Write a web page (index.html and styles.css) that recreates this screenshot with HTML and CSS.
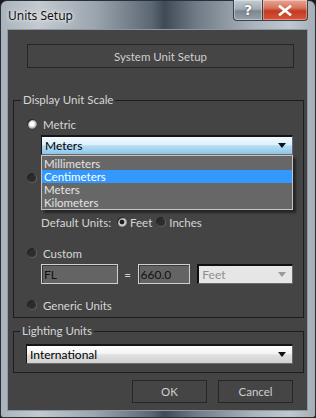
FILE: index.html
```html
<!DOCTYPE html>
<html>
<head>
<meta charset="utf-8">
<link rel="stylesheet" href="styles.css">
</head>
<body>
<div class="window">
  <div class="titlebar">
    <span class="title">Units Setup</span>
    <div class="caption-btns">
      <div class="cap help">?</div>
      <div class="cap close">
        <svg width="14" height="11" viewBox="0 0 14 11"><path d="M2 1.5 L12 9.5 M12 1.5 L2 9.5" stroke="#fff" stroke-width="2.6" stroke-linecap="square" fill="none"/></svg>
      </div>
    </div>
  </div>
  <div class="frame">
    <div class="client">
      <div class="btn sys">System Unit Setup</div>

      <div class="group display">
        <div class="legend">Display Unit Scale</div>
        <div class="row r-metric"><span class="radio on"></span><span>Metric</span></div>
        <div class="combo-wrap">
          <div class="combo blue"><span>Meters</span><span class="arrow"></span></div>
          <ul class="dropdown">
            <li>Millimeters</li>
            <li class="sel">Centimeters</li>
            <li>Meters</li>
            <li>Kilometers</li>
          </ul>
        </div>
        <div class="row r-us"><span class="radio"></span></div>
        <div class="combo-us"><div class="combo grey"><span class="arrow"></span></div></div>
        <div class="row r-default"><span class="txt">Default Units:</span><span class="radio on small"></span><span class="txt">Feet</span><span class="radio small"></span><span class="txt">Inches</span></div>
        <div class="row r-custom"><span class="radio"></span><span>Custom</span></div>
        <div class="custom-row">
          <div class="edit fl">FL</div>
          <span class="eq">=</span>
          <div class="edit num">660.0</div>
          <div class="combo disabled"><span>Feet</span><span class="arrow"></span></div>
        </div>
        <div class="row r-generic"><span class="radio"></span><span>Generic Units</span></div>
      </div>

      <div class="group lighting">
        <div class="legend">Lighting Units</div>
        <div class="combo grey intl"><span>International</span><span class="arrow"></span></div>
      </div>

      <div class="actions">
        <div class="btn act">OK</div>
        <div class="btn act">Cancel</div>
      </div>
    </div>
  </div>
</div>
</body>
</html>
```
FILE: styles.css
```css
* { box-sizing: border-box; }
html, body { margin: 0; padding: 0; }
body {
  width: 316px; height: 418px; overflow: hidden;
  background: #1a1a1a;
  font-family: Lato, "Open Sans", sans-serif;
  font-size: 11.5px;
}
.window {
  width: 316px; height: 418px;
  border-radius: 7px 7px 3px 3px;
  border: 1px solid #2a3038;
  background: linear-gradient(90deg, #a9b2bb 0%, #c3cad0 12%, #9ba5af 30%, #5c6774 48%, #3f4a56 52%, #6f7a86 62%, #aab3bc 80%, #c0c7ce 92%, #a4adb6 100%);
  display: flex; flex-direction: column;
  position: relative;
}
.titlebar {
  height: 28px;
  display: flex; align-items: flex-start; justify-content: space-between;
  position: relative;
}
.title {
  margin: 7px 0 0 7px;
  font-family: "Noto Sans", sans-serif;
  font-size: 12px; line-height: 16px;
  color: #111;
  text-shadow: 0 0 6px rgba(255,255,255,0.9), 0 0 3px rgba(255,255,255,0.8);
}
.caption-btns {
  display: flex;
  margin-right: 7px;
  margin-top: -1px;
}
.cap {
  height: 21px;
  border: 1px solid #3a4048;
  border-top: none;
  display: flex; align-items: center; justify-content: center;
  color: #fff;
  font-family: "DejaVu Sans", sans-serif;
  font-weight: bold; font-size: 14px;
  box-shadow: inset 0 0 0 1px rgba(255,255,255,0.35);
}
.help {
  width: 29px;
  border-radius: 0 0 0 4px;
  background: linear-gradient(#c5ccd3 0%, #a3acb5 45%, #7d8791 55%, #98a1ab 100%);
  text-shadow: 0 0 2px #333;
  border-right: none;
}
.close {
  width: 46px;
  border-radius: 0 0 4px 0;
  background: linear-gradient(#e8a796 0%, #d7725c 40%, #c13b20 55%, #d9553a 100%);
}
.frame {
  flex: 1;
  padding: 0 7px 6px 6px;
  display: flex;
}
.client {
  flex: 1;
  border: 1px solid #8d98a3;
  background: #444444;
  display: flex; flex-direction: column;
  color: #d8d8d8;
}
.btn {
  border: 1px solid #262626;
  display: flex; align-items: center; justify-content: center;
  color: #cfcfcf;
  background: #454545;
}
.sys {
  margin: 14px 0 0 19px;
  width: 267px; height: 24px;
}
.group {
  margin-left: 5px;
  width: 291px;
  border: 1px solid #1c1c1c;
  display: flex; flex-direction: column;
  position: relative;
}
.display { margin-top: 32px; padding: 0 10px 4px 13px; height: 218px; }
.lighting { margin-top: 13px; padding: 0 10px 8px 12px; height: 42px; }
.legend {
  margin: -8px 0 0 -6px;
  padding: 0 2px;
  width: fit-content;
  background: #444;
  line-height: 14px; height: 14px;
  color: #d6d6d6;
}
.row { display: flex; align-items: center; height: 14px; color: #d6d6d6; }
.row > span:nth-child(2) { margin-left: 6px; }
.r-metric { margin-top: 10px; }
.r-us { margin-top: 16px; }
.r-default { margin-top: 5px; padding-left: 14px; }
.r-default .txt { margin-left: 0 !important; }
.r-default .radio { margin: 0 3px 0 4px; }
.r-custom { margin-top: 17px; }
.r-generic { margin-top: 14px; }
.radio {
  width: 10px; height: 10px; border-radius: 50%;
  flex: none;
  background: radial-gradient(circle at 50% 50%, #2c2c2c 0 45%, #3a3a3a 55%, #8a8a8a 75%, #555 100%);
  box-shadow: inset 1px 1px 1px #1a1a1a;
}
.radio.on {
  background: radial-gradient(circle at 50% 50%, #ffffff 0 30%, #d2d2d2 45%, #9a9a9a 65%, #2a2a2a 80%);
}
.radio.small.on {
  background: radial-gradient(circle at 50% 50%, #1e1e1e 0 28%, #d8d8d8 40%, #b0b0b0 62%, #444 80%);
}
.combo-wrap { position: relative; margin: 4px 0 0 14px; }
.combo-us { margin: 5px 0 0 14px; }
.combo {
  height: 20px;
  display: flex; align-items: center; justify-content: space-between;
  padding: 0 6px 0 3px;
  color: #000;
  font-size: 12px;
  border-top: 2px solid #151515;
  border-left: 1px solid #151515;
  border-right: 1px solid #6a6a6a;
  border-bottom: 1px solid #6a6a6a;
}
.combo-us .combo { justify-content: flex-end; }
.arrow {
  width: 0; height: 0;
  border-left: 4px solid transparent; border-right: 4px solid transparent;
  border-top: 5px solid #111;
}
.blue {
  background: linear-gradient(#f3faff 0%, #dcf0fb 45%, #b4dcf3 52%, #8ec7e8 100%);
}
.grey {
  background: linear-gradient(#ffffff 0%, #f3f3f3 45%, #e0e0e0 52%, #d2d2d2 100%);
}
.dropdown {
  position: absolute;
  left: 0; top: 20px;
  width: 252px;
  margin: 0; padding: 1px 0 0;
  list-style: none;
  background: #676767;
  border: 1px solid #c4c4c4;
  box-shadow: 3px 3px 2px rgba(0,0,0,0.45);
  z-index: 2;
}
.dropdown li {
  height: 13px; line-height: 13px;
  padding-left: 2px;
  color: #e4e4e4;
  font-size: 11.5px;
  overflow: hidden;
}
.dropdown li.sel { background: #3399ff; color: #fff; }
.custom-row {
  display: flex; align-items: center;
  margin: 4px 0 0 14px; height: 20px;
}
.edit {
  height: 20px;
  background: #646464;
  border: 1px solid #d0d0d0;
  box-shadow: inset 1px 1px 0 #3a3a3a;
  color: #111;
  font-size: 12px;
  display: flex; align-items: center;
  padding-left: 2px;
}
.fl { width: 77px; }
.eq { width: 20px; text-align: center; color: #cfcfcf; }
.num { width: 53px; }
.disabled {
  margin-left: 7px;
  width: 96px;
  background: #e6e6e6;
  color: #8f8f8f;
  border-top: 2px solid #101010;
  border-left: 2px solid #101010;
}
.disabled .arrow { border-top-color: #9a9a9a; }
.intl { margin-top: 6px; width: 267px; }
.actions {
  margin-top: 7px;
  display: flex; justify-content: flex-end; gap: 11px;
  padding-right: 14px;
}
.act { width: 75px; height: 23px; }
```
